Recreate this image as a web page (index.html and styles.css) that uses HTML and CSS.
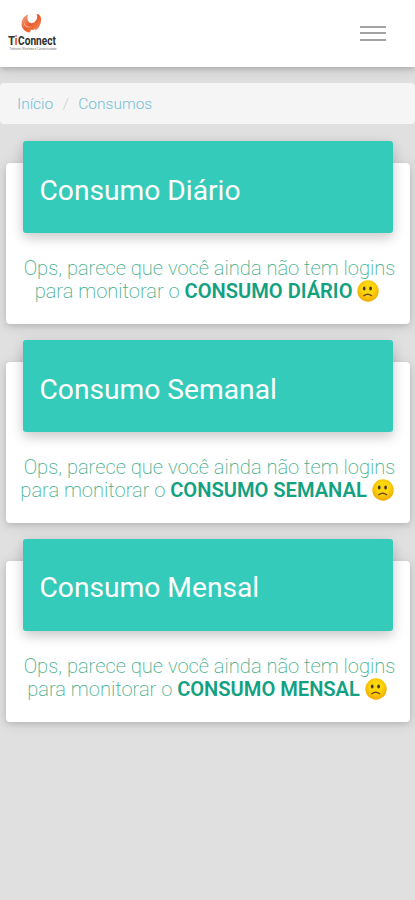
FILE: index.html
```html
<!DOCTYPE html>
<html lang="pt-BR">
<head>
<meta charset="utf-8">
<meta name="viewport" content="width=device-width, initial-scale=1">
<title>Consumos</title>
<link rel="stylesheet" href="styles.css">
</head>
<body>
<header class="topbar">
  <svg class="logo" width="60" height="46" viewBox="0 0 60 46" role="img" aria-label="TiConnect">
    <defs>
      <linearGradient id="flame" x1="0" y1="0" x2="1" y2="1">
        <stop offset="0" stop-color="#f9ad8c"/>
        <stop offset=".5" stop-color="#ea5a2c"/>
        <stop offset="1" stop-color="#f4965a"/>
      </linearGradient>
    </defs>
    <path fill="url(#flame)" d="M20 1.500C15 3 12.500 9 14 14C15.500 17.500 18.500 19.500 22 19.500C22.500 18.500 22.500 17.500 23 16.500C24.500 17.500 26 17 27 15.500L27.500 17.500C31.500 15 34.500 8 32.500 3.500C31.500 1.500 30 .8 28.500 1C30 4 29 7 27 8.500C25 11 22 10.500 20.500 8.500C19 6.500 19 3.500 20 1.500Z"/>
    <path fill="#fff" opacity=".6" d="M16 9C17 13 20 14.500 24 13.500C20 15.800 16 14 16 9Z"/>
    <g class="logo-name">
      <text x="0" y="31.800" textLength="7" lengthAdjust="spacingAndGlyphs">T</text>
      <text class="logo-i" x="6.500" y="31.800">i</text>
      <text x="10" y="31.800" textLength="38" lengthAdjust="spacingAndGlyphs">Connect</text>
    </g>
    <text class="logo-tag" x="1.500" y="37" textLength="47" lengthAdjust="spacingAndGlyphs">Telecom Wireless e Conectividade</text>
  </svg>
  <button class="menu" aria-label="Menu"><span></span><span></span><span></span></button>
</header>
<nav class="crumbs"><a>Início</a><span class="slash">/</span><a>Consumos</a></nav>
<main class="cards">
  <section class="card">
    <h2 class="card-title">Consumo Diário</h2>
    <p class="message"><span class="line first">Ops, parece que você ainda não tem logins</span><span class="line">para monitorar o <b>CONSUMO DIÁRIO</b> <svg class="face" viewBox="0 0 22 22"><use href="#sad"/></svg></span></p>
  </section>
  <section class="card">
    <h2 class="card-title">Consumo Semanal</h2>
    <p class="message"><span class="line first">Ops, parece que você ainda não tem logins</span><span class="line">para monitorar o <b>CONSUMO SEMANAL</b> <svg class="face" viewBox="0 0 22 22"><use href="#sad"/></svg></span></p>
  </section>
  <section class="card">
    <h2 class="card-title">Consumo Mensal</h2>
    <p class="message"><span class="line first">Ops, parece que você ainda não tem logins</span><span class="line">para monitorar o <b>CONSUMO MENSAL</b> <svg class="face" viewBox="0 0 22 22"><use href="#sad"/></svg></span></p>
  </section>
</main>
<svg class="symbols" width="0" height="0">
  <defs>
    <radialGradient id="skin" cy=".4" r=".62">
      <stop offset=".45" stop-color="#fdd60b"/>
      <stop offset="1" stop-color="#efa600"/>
    </radialGradient>
    <symbol id="sad" viewBox="0 0 22 22">
      <circle cx="11" cy="11" r="10.700" fill="url(#skin)"/>
      <ellipse cx="7.200" cy="8.600" rx="1.350" ry="2" fill="#4b3422"/>
      <ellipse cx="13.600" cy="8.600" rx="1.350" ry="2" fill="#4b3422"/>
      <path d="M6.800 15.700Q10.700 12.800 14.600 15.700" fill="none" stroke="#6d4818" stroke-width="1.400" stroke-linecap="round"/>
    </symbol>
  </defs>
</svg>
</body>
</html>
```
FILE: styles.css
```css
* { box-sizing: border-box; }
body {
  margin: 0;
  min-height: 900px;
  background: #e0e0e0;
  font-family: Roboto, "Liberation Sans", sans-serif;
}
.topbar {
  display: flex;
  justify-content: space-between;
  align-items: flex-start;
  height: 67px;
  padding: 13px 29px 0 8px;
  background: #fff;
  box-shadow: 0 2px 5px rgba(0, 0, 0, .16), 0 3px 14px rgba(0, 0, 0, .12);
}
.logo { overflow: visible; }
.logo-name { font-size: 12px; font-weight: 700; fill: #30302f; }
.logo-i { fill: #e9562b; }
.logo-tag { font-size: 3.5px; fill: #777; }
.menu {
  display: flex;
  flex-direction: column;
  gap: 4.500px;
  width: 26px;
  margin-top: 12.500px;
  padding: 0;
  border: 0;
  background: none;
}
.menu span { height: 2.200px; width: 26px; background: #a3a3a3; }
.crumbs {
  display: flex;
  align-items: center;
  height: 41px;
  margin-top: 16.400px;
  padding: 0 17px;
  border-radius: 4px;
  background: #f5f5f5;
  font-size: 15.500px;
  font-weight: 300;
  color: #74bfd5;
}
.slash { width: 25px; text-align: center; color: #ccc; }
.cards {
  display: flex;
  flex-direction: column;
  gap: 37.800px;
  padding: 39px 5px 0 6px;
}
.card {
  height: 161px;
  padding: 0 17px;
  border-radius: 4px;
  background: #fff;
  box-shadow: 0 2px 5px rgba(0, 0, 0, .1), 0 2px 14px rgba(0, 0, 0, .12);
}
.card-title {
  display: flex;
  align-items: center;
  height: 92px;
  margin: -22px 0 0;
  padding: 6px 16.500px 0;
  border-radius: 3px;
  background: #35cbba;
  color: #fff;
  font-size: 28.200px;
  font-weight: 400;
  box-shadow: 0 5px 11px rgba(0, 0, 0, .13), 0 4px 15px rgba(0, 0, 0, .1);
}
.message {
  display: flex;
  flex-direction: column;
  align-items: center;
  margin: 24px -9px 0 -11px;
  font-size: 20.100px;
  font-weight: 200;
  line-height: 23px;
  color: #3dad88;
}
.line { display: block; white-space: nowrap; }
.first { padding-left: 5px; }
.message b { font-weight: 600; color: #12a181; }
.face { width: 22px; height: 22px; vertical-align: -4px; }
```
